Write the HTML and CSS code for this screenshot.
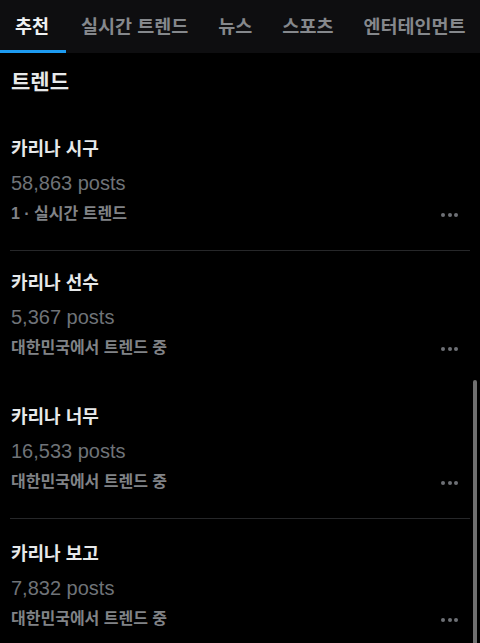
FILE: index.html
```html
<!DOCTYPE html>
<html>
<head>
  <meta charset="utf-8">
  <link rel="stylesheet" href="styles.css">
  <title>트렌드</title>
</head>
<body>
  <nav class="tabs">
    <div class="tab active">추천</div>
    <div class="tab">실시간 트렌드</div>
    <div class="tab">뉴스</div>
    <div class="tab">스포츠</div>
    <div class="tab">엔터테인먼트</div>
  </nav>

  <main class="list">
    <h2 class="heading">트렌드</h2>

    <div class="item">
      <div class="title">카리나 시구</div>
      <div class="posts">58,863 posts</div>
      <div class="meta">
        <span>1 · 실시간 트렌드</span>
        <span class="more"><i></i><i></i><i></i></span>
      </div>
    </div>

    <div class="item plain">
      <div class="title">카리나 선수</div>
      <div class="posts">5,367 posts</div>
      <div class="meta">
        <span>대한민국에서 트렌드 중</span>
        <span class="more"><i></i><i></i><i></i></span>
      </div>
    </div>

    <div class="item">
      <div class="title">카리나 너무</div>
      <div class="posts">16,533 posts</div>
      <div class="meta">
        <span>대한민국에서 트렌드 중</span>
        <span class="more"><i></i><i></i><i></i></span>
      </div>
    </div>

    <div class="item last">
      <div class="title">카리나 보고</div>
      <div class="posts">7,832 posts</div>
      <div class="meta">
        <span>대한민국에서 트렌드 중</span>
        <span class="more"><i></i><i></i><i></i></span>
      </div>
    </div>
  </main>

  <div class="scrollbar"></div>
</body>
</html>
```

FILE: styles.css
```css
body {
  margin: 0;
  height: 643px;
  overflow: hidden;
  background-color: #000;
  color: #e7e9ea;
  font-family: "Liberation Sans", "Noto Sans CJK KR", sans-serif;
  position: relative;
}

.tabs {
  display: flex;
  height: 53px;
  background-color: #0e0e10;
  white-space: nowrap;
}

.tab {
  display: flex;
  align-items: center;
  padding: 0 15px;
  border-bottom: 3px solid transparent;
  font-size: 18.5px;
  font-weight: bold;
  color: #85888c;
}

.tab.active {
  padding-right: 17px;
  color: #eff1f2;
  border-bottom-color: #1d9bf0;
}

.list {
  padding: 0 10px;
}

.heading {
  margin: 0;
  padding: 14px 0 20px 1px;
  font-size: 21px;
  line-height: 30px;
  font-weight: bold;
}

.item {
  padding: 15px 12px 22px 1px;
  border-bottom: 1px solid #262729;
}

.item.plain {
  border-bottom-color: transparent;
}

.item.last {
  padding-top: 18px;
  border-bottom: none;
}

.title {
  font-size: 18px;
  line-height: 34px;
  font-weight: bold;
}

.posts {
  font-size: 20px;
  line-height: 34px;
  color: #6f7378;
}

.meta {
  display: flex;
  justify-content: space-between;
  align-items: center;
  font-size: 16px;
  line-height: 28px;
  font-weight: bold;
  color: #808387;
}

.more {
  display: flex;
  gap: 2.5px;
  padding-top: 2px;
}

.more i {
  width: 4px;
  height: 4px;
  border-radius: 50%;
  background-color: #6d7075;
}

.scrollbar {
  position: absolute;
  right: 3px;
  top: 380px;
  bottom: 0;
  width: 4px;
  border-radius: 2px 2px 0 0;
  background-color: #707070;
}
```
